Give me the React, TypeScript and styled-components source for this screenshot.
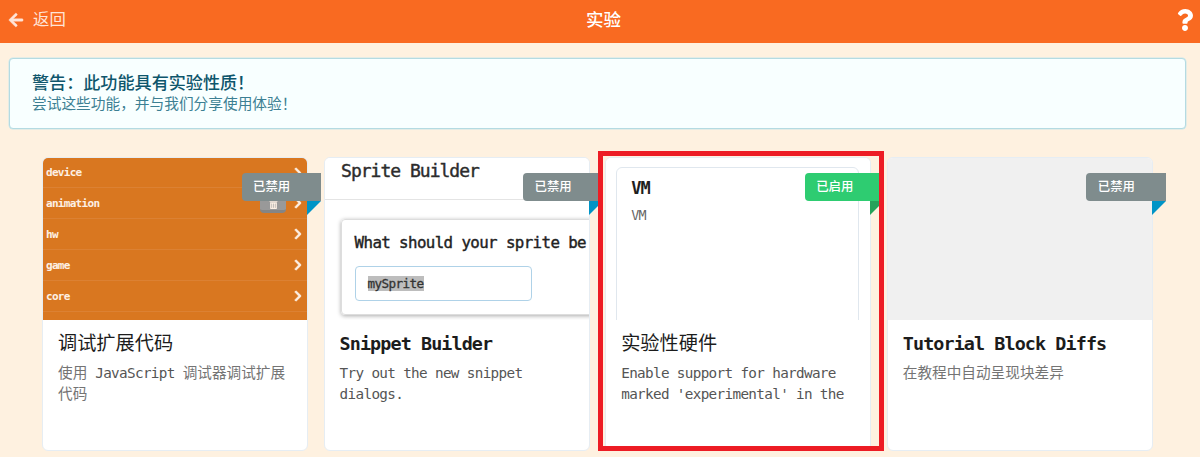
import React from "react";
import styled, { createGlobalStyle } from "styled-components";
import { FaArrowLeft, FaChevronRight, FaQuestion, FaTrashAlt } from "react-icons/fa";

const GlobalStyle = createGlobalStyle`
  *, *::before, *::after { box-sizing: border-box; }
  body { margin: 0; background: #fef1e0; overflow: hidden; }
`;

const Page = styled.div`
  height: 457px;
  overflow: hidden;
  background: #fef1e0;
  font-family: "DejaVu Sans Mono", "Noto Sans CJK SC", monospace;
`;

const Header = styled.header`
  height: 43px;
  display: grid;
  grid-template-columns: 1fr auto 1fr;
  background: #f96a21;
  color: #fff;
  font-family: "Noto Sans CJK SC", sans-serif;
`;

const BackButton = styled.div`
  display: flex;
  align-items: flex-start;
  gap: 9px;
  padding: 12px 0 0 8px;
  color: #ffe4d7;
  font-size: 16.4px;
  line-height: 16px;
  span { margin-top: -2px; }
`;

const BackArrow = styled(FaArrowLeft)`
  width: 16px;
  height: 16px;
  stroke: currentColor;
  stroke-width: 14px;
`;

const HeaderTitle = styled.h1`
  margin: 0;
  padding: 7px 0 0 7px;
  font-size: 17.5px;
  line-height: 24px;
  font-weight: 500;
`;

const HelpButton = styled.div`
  display: flex;
  justify-content: flex-end;
  padding: 9px 4px 0 0;
`;

const Notice = styled.section`
  margin: 15px 14px 0 9px;
  height: 71px;
  padding: 12px 22px;
  border: 1px solid #b4dbe2;
  box-shadow: 0 0 0 0.5px #c9e7eb;
  border-radius: 4px;
  background: #f8ffff;
  font-family: "Noto Sans CJK SC", sans-serif;
`;

const NoticeTitle = styled.div`
  color: #0e566c;
  font-size: 17.1px;
  line-height: 22px;
  font-weight: 500;
`;

const NoticeText = styled.div`
  margin-top: -1px;
  color: #3c7f93;
  font-size: 14.7px;
  line-height: 21px;
`;

const Cards = styled.main`
  display: flex;
  gap: 15.6px;
  padding: 28px 0 0 42px;
`;

const CardBox = styled.article`
  position: relative;
  flex: none;
  width: 266px;
  height: 294px;
  border: 1px solid #e6edf3;
  border-radius: 6px;
  background: #fff;
`;

const Preview = styled.div<{ $bg: string }>`
  height: 162px;
  overflow: hidden;
  border-radius: 5px 5px 0 0;
  background: ${(p) => p.$bg};
`;

const CardTitle = styled.h2<{ $latin?: boolean }>`
  margin: 0;
  padding: ${(p) => (p.$latin ? "11px" : "10px")} 15px 0;
  height: 39px;
  color: #1c1c1c;
  font-size: ${(p) => (p.$latin ? "18.4px" : "19.2px")};
  letter-spacing: ${(p) => (p.$latin ? "-0.9px" : "0")};
  font-weight: ${(p) => (p.$latin ? 700 : 400)};
  font-family: ${(p) =>
    p.$latin ? '"DejaVu Sans Mono", monospace' : '"Noto Sans CJK SC", sans-serif'};
  line-height: 25px;
  white-space: nowrap;
`;

const CardText = styled.p`
  margin: 0;
  padding: 3px 15px 0;
  color: #747474;
  font-family: "Noto Sans CJK SC", sans-serif;
  font-size: 14.65px;
  line-height: 20px;
  white-space: nowrap;
`;

const Latin = styled.span`
  color: #555;
  font-family: "DejaVu Sans Mono", monospace;
  font-size: 14.3px;
  letter-spacing: -0.66px;
`;

const Ribbon = styled.div<{ $on?: boolean }>`
  position: absolute;
  top: 15px;
  right: -14px;
  width: 79.5px;
  height: 28px;
  padding-left: 11.5px;
  border-radius: 4px 0 0 4px;
  background: ${(p) => (p.$on ? "#2ecc71" : "#7f8c8d")};
  color: #fff;
  font-family: "Noto Sans CJK SC", sans-serif;
  font-size: 12.4px;
  line-height: 27px;
  font-weight: 500;
  &::after {
    content: "";
    position: absolute;
    top: 100%;
    right: 0;
    border-top: 14px solid ${(p) => (p.$on ? "#25a25a" : "#0094c6")};
    border-right: 14px solid transparent;
  }
`;

const Highlight = styled.div`
  position: absolute;
  top: -7px;
  left: -8.2px;
  width: 286px;
  height: 300px;
  border: 5px solid #ed1c24;
  z-index: 2;
`;

const BlockRow = styled.div`
  display: flex;
  align-items: center;
  justify-content: space-between;
  height: 31px;
  padding: 0 3px 0 3px;
  border-bottom: 1px solid #dc8133;
  color: #fdf0e4;
  font-size: 11px;
  font-weight: 700;
  letter-spacing: -0.7px;
  &:first-child { height: 30px; }
`;

const RowActions = styled.div`
  display: flex;
  align-items: center;
  gap: 6px;
`;

const Chevron = styled(FaChevronRight)`
  width: 12px;
  height: 12px;
  stroke: currentColor;
  stroke-width: 30px;
`;

const TrashButton = styled.span`
  display: flex;
  align-items: center;
  justify-content: center;
  width: 26px;
  height: 20px;
  padding-top: 5px;
  border-radius: 4px;
  background: #999;
  border-bottom: 3px solid #858585;
`;

const DialogTitle = styled.div`
  height: 42px;
  padding: 1px 0 0 16.5px;
  border-bottom: 1px solid #e4e4e4;
  color: #2c2c2c;
  font-size: 18px;
  line-height: 24px;
  letter-spacing: -1px;
  -webkit-text-stroke: 0.4px currentColor;
  white-space: nowrap;
`;

const DialogPanel = styled.div`
  width: 270px;
  height: 96px;
  margin: 19px 0 0 16px;
  padding: 12px 13px;
  border: 1px solid #ddd;
  border-radius: 4px;
  box-shadow: 0 1px 4px #aaa;
`;

const Question = styled.div`
  color: #222;
  font-size: 15.8px;
  line-height: 22px;
  letter-spacing: -0.61px;
  -webkit-text-stroke: 0.4px currentColor;
  white-space: nowrap;
`;

const NameField = styled.div`
  display: flex;
  align-items: center;
  width: 177px;
  height: 35px;
  margin-top: 12px;
  padding-left: 12px;
  border: 1.5px solid #afd2e8;
  border-radius: 4px;
`;

const Selection = styled.span`
  background: #bdbdbd;
  color: #333;
  font-size: 12.6px;
  line-height: 15px;
  letter-spacing: -0.58px;
  -webkit-text-stroke: 0.3px currentColor;
`;

const NestedCard = styled.div`
  width: 243px;
  height: 160px;
  margin: 9px 0 0 10px;
  padding: 8px 14px;
  border: 1px solid #e0e7ee;
  border-radius: 6px;
`;

const NestedTitle = styled.div`
  color: #1f1f1f;
  font-size: 17px;
  font-weight: 700;
  line-height: 24px;
  letter-spacing: -1px;
`;

const NestedText = styled.div`
  margin-top: 6px;
  color: #666;
  font-size: 13.4px;
  line-height: 20px;
  letter-spacing: -0.8px;
`;

const blocks = ["device", "animation", "hw", "game", "core"];

type CardProps = {
  preview?: React.ReactNode;
  previewBg?: string;
  title: string;
  latinTitle?: boolean;
  enabled?: boolean;
  highlighted?: boolean;
  children: React.ReactNode;
};

function Card({ preview, previewBg = "#fff", title, latinTitle, enabled, highlighted, children }: CardProps) {
  return (
    <CardBox>
      <Preview $bg={previewBg}>{preview}</Preview>
      <CardTitle $latin={latinTitle}>{title}</CardTitle>
      <CardText>{children}</CardText>
      <Ribbon $on={enabled}>{enabled ? "已启用" : "已禁用"}</Ribbon>
      {highlighted && <Highlight />}
    </CardBox>
  );
}

export default function App() {
  return (
    <Page>
      <GlobalStyle />
      <Header>
        <BackButton>
          <BackArrow />
          <span>返回</span>
        </BackButton>
        <HeaderTitle>实验</HeaderTitle>
        <HelpButton>
          <FaQuestion size={22} />
        </HelpButton>
      </Header>
      <Notice>
        <NoticeTitle>警告：此功能具有实验性质！</NoticeTitle>
        <NoticeText>尝试这些功能，并与我们分享使用体验！</NoticeText>
      </Notice>
      <Cards>
        <Card
          title="调试扩展代码"
          previewBg="#d97720"
          preview={blocks.map((name) => (
            <BlockRow key={name}>
              <span>{name}</span>
              <RowActions>
                {name === "animation" && (
                  <TrashButton>
                    <FaTrashAlt size={9} />
                  </TrashButton>
                )}
                <Chevron />
              </RowActions>
            </BlockRow>
          ))}
        >
          使用<Latin> JavaScript </Latin>调试器调试扩展
          <br />
          代码
        </Card>
        <Card
          title="Snippet Builder"
          latinTitle
          preview={
            <>
              <DialogTitle>Sprite Builder</DialogTitle>
              <DialogPanel>
                <Question>What should your sprite be</Question>
                <NameField>
                  <Selection>mySprite</Selection>
                </NameField>
              </DialogPanel>
            </>
          }
        >
          <Latin>
            Try out the new snippet
            <br />
            dialogs.
          </Latin>
        </Card>
        <Card
          title="实验性硬件"
          enabled
          highlighted
          preview={
            <NestedCard>
              <NestedTitle>VM</NestedTitle>
              <NestedText>VM</NestedText>
            </NestedCard>
          }
        >
          <Latin>
            Enable support for hardware
            <br />
            marked 'experimental' in the
          </Latin>
        </Card>
        <Card title="Tutorial Block Diffs" latinTitle previewBg="#f0f0f0">
          在教程中自动呈现块差异
        </Card>
      </Cards>
    </Page>
  );
}
